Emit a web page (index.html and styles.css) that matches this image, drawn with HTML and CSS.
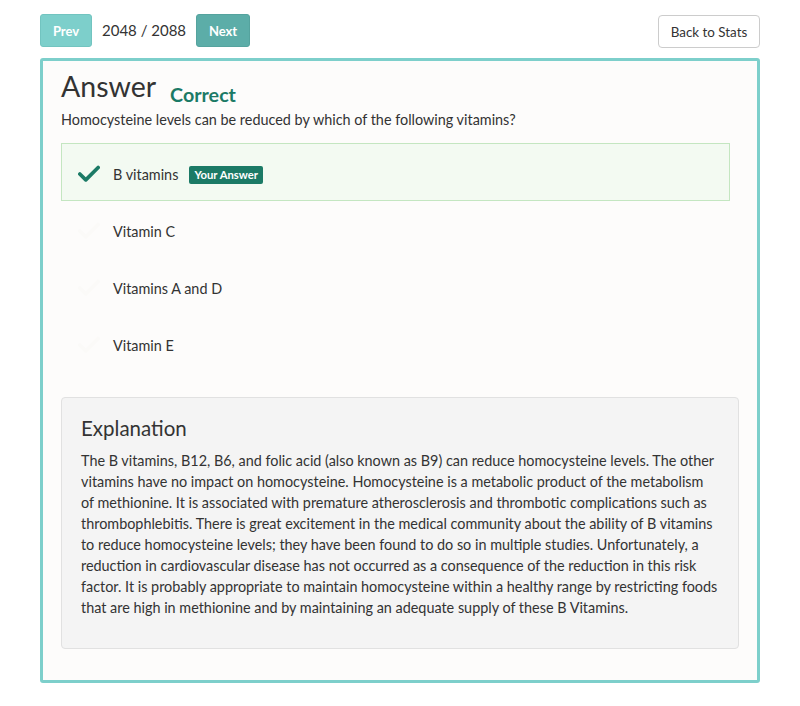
FILE: index.html
```html
<!DOCTYPE html>
<html>
<head>
<meta charset="utf-8">
<link rel="stylesheet" href="styles.css">
</head>
<body>
<div class="page">
  <div class="nav">
    <div class="nav-left">
      <button class="btn btn-prev">Prev</button>
      <span class="counter">2048 / 2088</span>
      <button class="btn btn-next">Next</button>
    </div>
    <button class="btn-back">Back to Stats</button>
  </div>

  <div class="card">
    <div class="title-row">
      <h1 class="title">Answer</h1>
      <span class="status">Correct</span>
    </div>
    <p class="question">Homocysteine levels can be reduced by which of the following vitamins?</p>

    <ul class="options">
      <li class="option selected">
        <svg class="check" viewBox="0 0 24 18"><path d="M2 9.5 L8.5 16 L22 2.5" /></svg>
        <span class="opt-text">B vitamins</span>
        <span class="badge">Your Answer</span>
      </li>
      <li class="option">
        <svg class="check faint" viewBox="0 0 24 18"><path d="M2 9.5 L8.5 16 L22 2.5" /></svg>
        <span class="opt-text">Vitamin C</span>
      </li>
      <li class="option">
        <svg class="check faint" viewBox="0 0 24 18"><path d="M2 9.5 L8.5 16 L22 2.5" /></svg>
        <span class="opt-text">Vitamins A and D</span>
      </li>
      <li class="option">
        <svg class="check faint" viewBox="0 0 24 18"><path d="M2 9.5 L8.5 16 L22 2.5" /></svg>
        <span class="opt-text">Vitamin E</span>
      </li>
    </ul>

    <div class="explanation">
      <h2 class="exp-title">Explanation</h2>
      <p class="exp-text">The B vitamins, B12, B6, and folic acid (also known as B9) can reduce homocysteine levels. The other vitamins have no impact on homocysteine. Homocysteine is a metabolic product of the metabolism of methionine. It is associated with premature atherosclerosis and thrombotic complications such as thrombophlebitis. There is great excitement in the medical community about the ability of B vitamins to reduce homocysteine levels; they have been found to do so in multiple studies. Unfortunately, a reduction in cardiovascular disease has not occurred as a consequence of the reduction in this risk factor. It is probably appropriate to maintain homocysteine within a healthy range by restricting foods that are high in methionine and by maintaining an adequate supply of these B Vitamins.</p>
    </div>
  </div>
</div>
</body>
</html>
```

FILE: styles.css
```css
* { box-sizing: border-box; }

html, body {
  margin: 0;
  padding: 0;
  background: #ffffff;
}

body {
  font-family: Lato, "Open Sans", sans-serif;
  font-size: 14.4px;
  line-height: 1.5;
  color: #333333;
}

.page {
  width: 720px;
  margin: 0 40px;
  padding-top: 14px;
}

.nav {
  display: flex;
  justify-content: space-between;
  align-items: flex-start;
  height: 44px;
}

.nav-left {
  display: flex;
  align-items: center;
  gap: 10px;
}

.btn {
  font-family: Lato, sans-serif;
  font-weight: 700;
  font-size: 13px;
  color: #ffffff;
  border: 1px solid transparent;
  border-radius: 3px;
  height: 33px;
  padding: 0 10px;
  cursor: pointer;
}

.btn-prev {
  background: #7dcfcb;
  border-color: #72c4c0;
  width: 52px;
}

.btn-next {
  background: #5cada8;
  border-color: #55a39e;
  width: 54px;
}

.counter {
  font-size: 15px;
  color: #333;
  padding-bottom: 1px;
}

.btn-back {
  font-family: Lato, sans-serif;
  font-size: 13.4px;
  color: #333;
  background: #ffffff;
  border: 1px solid #cccccc;
  border-radius: 4px;
  height: 33px;
  width: 102px;
  margin-top: 1px;
  padding: 0;
}

.card {
  border: 3px solid #7dcfcb;
  border-radius: 3px;
  background: #fdfcfb;
  padding: 7px 18px 31px 18px;
}

.title-row {
  display: flex;
  align-items: flex-end;
  height: 37px;
}

.title {
  margin: 0;
  font-size: 28.5px;
  font-weight: 400;
  line-height: 37px;
  color: #333;
}

.status {
  font-size: 19.7px;
  font-weight: 700;
  color: #1b7a66;
  margin-left: 14px;
  line-height: 20px;
  margin-bottom: 0;
}

.question {
  margin: 4px 0 0 0;
  line-height: 21px;
}

.options {
  list-style: none;
  margin: 13px 0 0 0;
  padding: 0;
  width: 669px;
}

.option {
  display: flex;
  align-items: center;
  height: 58px;
  margin-bottom: -1px;
  border: 1px solid transparent;
  padding-left: 16px;
  padding-top: 6px;
}

.option.selected {
  background: #f3faf2;
  border-color: #c4e6c1;
}

.check {
  width: 22px;
  height: 17px;
  margin-top: -4px;
  fill: none;
  stroke: #1b7a66;
  stroke-width: 4;
  stroke-linecap: round;
  stroke-linejoin: round;
}

.check.faint {
  stroke: #fbfaf8;
}

.opt-text {
  margin-left: 13px;
}

.badge {
  margin-left: 11px;
  background: #1b7a66;
  color: #ffffff;
  font-size: 11.3px;
  font-weight: 700;
  line-height: 18px;
  padding: 0 5px;
  border-radius: 2px;
}

.explanation {
  margin-top: 26px;
  width: 678px;
  background: #f4f4f4;
  border: 1px solid #e1e1e1;
  border-radius: 4px;
  padding: 15px 20px 30px 19px;
}

.exp-title {
  margin: 0;
  font-size: 20.5px;
  font-weight: 400;
  line-height: 30px;
  color: #333;
}

.exp-text {
  margin: 7px 0 0 0;
  line-height: 21px;
}
```
